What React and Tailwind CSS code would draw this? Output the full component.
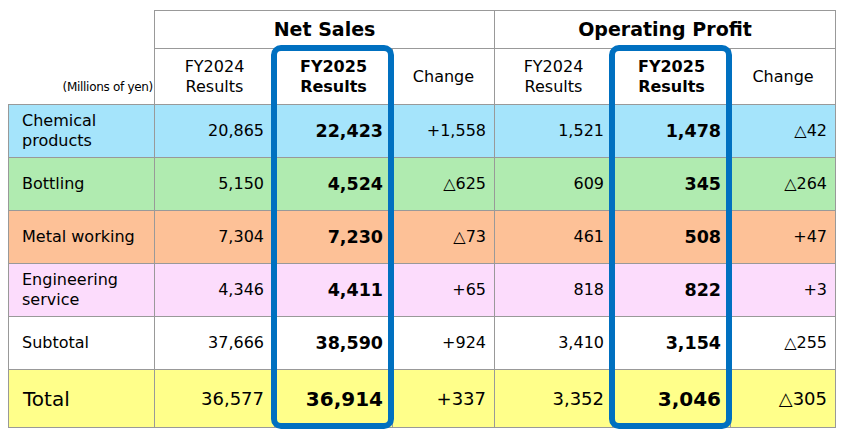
import React from 'react';

const rows = [
  { label: ['Chemical', 'products'], bg: 'bg-[#a5e4fb]', v: ['20,865', '22,423', '+1,558', '1,521', '1,478', '△42'] },
  { label: ['Bottling'], bg: 'bg-[#b0ebb0]', v: ['5,150', '4,524', '△625', '609', '345', '△264'] },
  { label: ['Metal working'], bg: 'bg-[#fdc197]', v: ['7,304', '7,230', '△73', '461', '508', '+47'] },
  { label: ['Engineering', 'service'], bg: 'bg-[#fcdcfc]', v: ['4,346', '4,411', '+65', '818', '822', '+3'] },
  { label: ['Subtotal'], bg: 'bg-white', v: ['37,666', '38,590', '+924', '3,410', '3,154', '△255'] },
];

const total = ['36,577', '36,914', '+337', '3,352', '3,046', '△305'];

export default function App() {
  const cell = 'border border-[#999] text-right';

  return (
    <div className="relative w-[859px] h-[436px] bg-white font-['DejaVu_Sans',sans-serif] text-black">
      <div className="pt-[10px] pl-[8px]">
        <table className="table-fixed border-collapse w-[827px]">
          <colgroup>
            <col className="w-[146px]" />
            <col className="w-[120px]" />
            <col className="w-[118px]" />
            <col className="w-[102px]" />
            <col className="w-[118px]" />
            <col className="w-[118px]" />
            <col className="w-[105px]" />
          </colgroup>
          <thead>
            <tr className="h-[38px]">
              <th></th>
              <th colSpan={3} className="border border-[#999] text-[19px] font-bold">Net Sales</th>
              <th colSpan={3} className="border border-[#999] text-[19px] font-bold">Operating Profit</th>
            </tr>
            <tr className="h-[56px]">
              <th className="border-b border-[#999] text-right align-bottom pb-[8px] pr-[1px] text-[12px] font-normal whitespace-nowrap tracking-[-0.3px]">
                (Millions of yen)
              </th>
              <th className="border border-[#999] text-[16px] font-normal leading-[20px]">FY2024<br />Results</th>
              <th className="border border-[#999] text-[16px] font-bold leading-[20px]">FY2025<br />Results</th>
              <th className="border border-[#999] text-[16px] font-normal">Change</th>
              <th className="border border-[#999] text-[16px] font-normal leading-[20px]">FY2024<br />Results</th>
              <th className="border border-[#999] text-[16px] font-bold leading-[20px]">FY2025<br />Results</th>
              <th className="border border-[#999] text-[16px] font-normal">Change</th>
            </tr>
          </thead>
          <tbody>
            {rows.map(r => (
              <tr key={r.label[0]} className={`h-[53px] ${r.bg}`}>
                <td className="border border-[#999] pl-[13px] text-[16px] leading-[20px]">
                  {r.label.map((l, i) => <div key={i}>{l}</div>)}
                </td>
                {r.v.map((v, i) => (
                  <td
                    key={i}
                    className={`${cell} ${i === 1 || i === 4 ? 'text-[17.5px] font-bold pr-[9px]' : i === 0 ? 'text-[16px] pr-[10px]' : 'text-[16px] pr-[8px]'}`}
                  >
                    {v}
                  </td>
                ))}
              </tr>
            ))}
            <tr className="h-[58px] bg-[#ffff8a]">
              <td className="border border-[#999] pl-[14px] text-[20px]">Total</td>
              {total.map((v, i) => (
                <td
                  key={i}
                  className={`${cell} ${i === 1 || i === 4 ? 'text-[20px] font-bold pr-[9px]' : i === 0 ? 'text-[18px] pr-[10px]' : 'text-[18px] pr-[8px]'}`}
                >
                  {v}
                </td>
              ))}
            </tr>
          </tbody>
        </table>
      </div>

      {/* highlight frames over the FY2025 columns */}
      <div className="absolute left-[271px] top-[45px] w-[123px] h-[384px] border-[6px] border-[#0070c0] rounded-[10px]"></div>
      <div className="absolute left-[609px] top-[45px] w-[123px] h-[384px] border-[6px] border-[#0070c0] rounded-[10px]"></div>
    </div>
  );
}
